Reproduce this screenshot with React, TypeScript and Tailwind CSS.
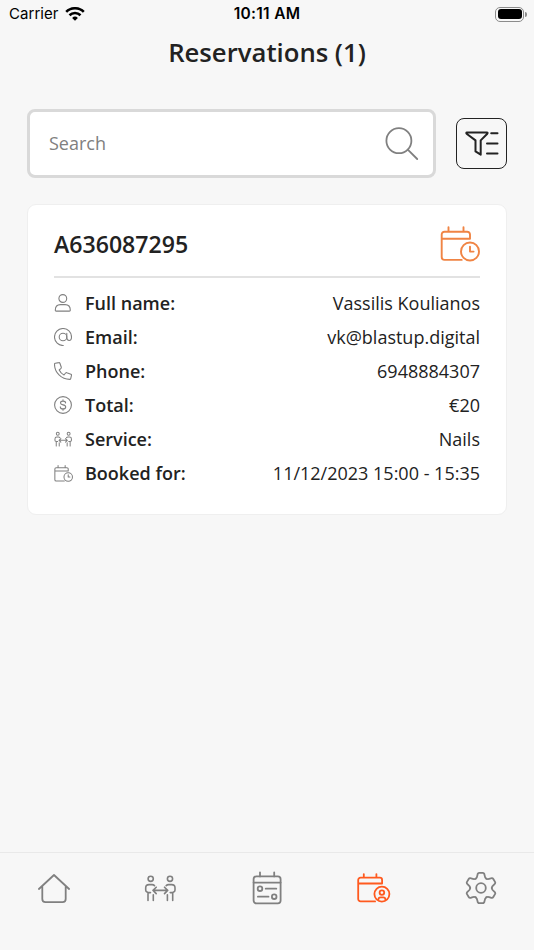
import type { ReactNode } from 'react';
import { clsx } from 'clsx';

interface IconProps {
  className?: string;
  strokeWidth?: number;
}

interface SvgProps extends IconProps {
  viewBox: string;
  children: ReactNode;
}

function Svg({ className, viewBox, strokeWidth = 1.8, children }: SvgProps) {
  return (
    <svg
      className={clsx('block shrink-0', className)}
      viewBox={viewBox}
      fill="none"
      stroke="currentColor"
      strokeWidth={strokeWidth}
      strokeLinecap="round"
      strokeLinejoin="round"
    >
      {children}
    </svg>
  );
}

function CalendarClockIcon({ className, strokeWidth = 1.9 }: IconProps) {
  return (
    <Svg className={className} viewBox="0 0 40 36" strokeWidth={strokeWidth}>
      <path d="M30 12.7V8.5a2.8 2.8 0 0 0-2.8-2.8H4.5a2.8 2.8 0 0 0-2.8 2.8v22.6a2.8 2.8 0 0 0 2.8 2.8h17.2M1.7 12.7h28.3M8.5 1.3v4.4M23.5 1.3v4.4" />
      <circle cx="30" cy="25.5" r="9" />
      <path d="M30 20.6v5h3.6" />
    </Svg>
  );
}

function PeopleIcon({ className, strokeWidth = 1.6 }: IconProps) {
  return (
    <Svg className={className} viewBox="0 0 32 28" strokeWidth={strokeWidth}>
      <circle cx="6.7" cy="4.8" r="2.6" />
      <circle cx="26" cy="4.8" r="2.6" />
      <path d="M4 26.5v-8l-1-.4c-1-.4-1.3-1-1.3-2.1v-2.2c0-2 1.4-3.2 3.4-3.2h3c1 0 1.7.3 2.4 1M4 18.6h2.5M9.3 26.5v-5.7" />
      <path d="M28.7 26.5v-8l1-.4c1-.4 1.3-1 1.3-2.1v-2.2c0-2-1.4-3.2-3.4-3.2h-3c-1 0-1.7.3-2.4 1M28.7 18.6h-2.5M23.4 26.5v-5.7" />
      <path d="M9 16.4h14.7M12.2 13.2 9 16.4l3.2 3.2M20.5 13.2l3.2 3.2-3.2 3.2" />
    </Svg>
  );
}

function PersonIcon() {
  return (
    <Svg className="h-[18px] w-[18px]" viewBox="0 0 18 18" strokeWidth={1.1}>
      <circle cx="8.8" cy="4.5" r="3.9" />
      <path d="M1.3 16.2c0-3.6 2-5.6 5.2-5.6h4.6c3.2 0 5.2 2 5.2 5.6 0 .6-.3.9-.9.9H2.2c-.6 0-.9-.3-.9-.9Z" />
    </Svg>
  );
}

function AtIcon() {
  return (
    <Svg className="h-[18px] w-[18px]" viewBox="0 0 18 18" strokeWidth={1.1}>
      <circle cx="9" cy="9" r="3.8" />
      <path d="M12.8 5.4v4.2c0 1.7 1 2.9 2.4 2.9s2.3-1.3 2.3-3.5A8.5 8.5 0 1 0 9.3 17.5" />
    </Svg>
  );
}

function PhoneIcon() {
  return (
    <Svg className="h-[18px] w-[18px]" viewBox="0 0 18 18" strokeWidth={1.1}>
      <path d="M1.3 1.2 4.8.6c.5-.1.9.1 1.1.6l1.4 4c.2.5 0 .9-.3 1.2L5.2 8c1 2.2 2.6 3.9 4.8 5l1.6-2c.3-.4.7-.5 1.2-.3l4.1 1.5c.5.2.7.6.6 1.1l-.8 3.3c-.1.5-.5.8-1 .8C7.5 17.4.5 10.5.5 2.2c0-.5.3-.9.8-1Z" />
    </Svg>
  );
}

function DollarIcon() {
  return (
    <Svg className="h-[18px] w-[18px]" viewBox="0 0 18 18" strokeWidth={1.1}>
      <circle cx="9" cy="9" r="8.4" />
      <path d="M11.6 6.9C11.5 5.7 10.5 5.1 9 5.1S6.5 5.9 6.5 7s.8 1.6 2.5 1.9 2.7.8 2.7 2-1.1 2-2.7 2-2.7-.7-2.7-2M9 3.8v1.3M9 12.9v1.3" />
    </Svg>
  );
}

function SearchIcon() {
  return (
    <Svg className="h-[34px] w-[34px] text-[#808080]" viewBox="0 0 34 34">
      <circle cx="13.9" cy="13.7" r="12.5" />
      <path d="m22.8 22.6 9.4 9.4" />
    </Svg>
  );
}

function FilterIcon() {
  return (
    <Svg className="-mt-px h-[26px] w-[34px]" viewBox="0 0 34 26" strokeWidth={2}>
      <path d="M1.9 2.4h20c.8 0 .9.7.4 1.3l-6.6 6.7v14.3l-5.2-3.3v-11L1.6 3.7c-.5-.6-.4-1.3.3-1.3Z" />
      <path d="M26.2 3.3h6.3M22 13.6h10.5M22 23.4h10.5" />
    </Svg>
  );
}

function HomeIcon() {
  return (
    <Svg className="ml-px h-8 w-8" viewBox="0 0 32 32">
      <path d="M.9 17 16 3l15.1 14M4.3 14v12.9a3.2 3.2 0 0 0 3.2 3.2h17a3.2 3.2 0 0 0 3.2-3.2V14" />
    </Svg>
  );
}

function ScheduleIcon() {
  return (
    <Svg className="h-[34px] w-[30px]" viewBox="0 0 30 34">
      <rect x="1.6" y="5.4" width="27" height="27" rx="2.8" />
      <path d="M1.6 11.6h27M8 1.3v4.1M22.2 1.3v4.1M13.7 17.7h10.6M5.9 25.7h10.6" />
      <circle cx="8" cy="17.7" r="2.3" />
      <circle cx="22.2" cy="25.7" r="2.3" />
    </Svg>
  );
}

function ReservationsIcon() {
  return (
    <Svg className="h-[30px] w-[34px]" viewBox="0 0 34 30">
      <path d="M25.1 10.5V6.9a2.3 2.3 0 0 0-2.3-2.3H3.5a2.3 2.3 0 0 0-2.3 2.3v19.2a2.3 2.3 0 0 0 2.3 2.3h14.6M1.2 10.5h23.9M6.8 1.1v3.5M19.4 1.1v3.5" />
      <circle cx="24.9" cy="21.1" r="7.5" />
      <circle cx="24.9" cy="19.6" r="2.3" />
      <path d="M21.4 26.6c0-1.6 1-2.3 2.3-2.3h2.4c1.3 0 2.3.7 2.3 2.3" />
    </Svg>
  );
}

// One tooth of the gear pointing up, repeated six times around the centre
const GEAR_ANGLES = [0, 60, 120, 180, 240, 300];

function GearIcon() {
  return (
    <Svg className="h-[34px] w-8" viewBox="-16 -17 32 34">
      {GEAR_ANGLES.map((angle) => (
        <path
          key={angle}
          transform={`rotate(${angle})`}
          d="M-5.4-9.3Q-3.9-10.2-3.5-13.2-3.3-15.2-1.7-15.2H1.7Q3.3-15.2 3.5-13.2 3.9-10.2 5.4-9.3"
        />
      ))}
      <circle r="4.8" />
    </Svg>
  );
}

function WifiIcon() {
  return (
    <Svg className="h-[14px] w-[20px] text-black" viewBox="0 0 20 14" strokeWidth={2.6}>
      <path d="M1.2 4.9a12.5 12.5 0 0 1 17.6 0M4.5 8.2a7.9 7.9 0 0 1 11 0" strokeLinecap="butt" />
      <path d="M10 13.8 7.1 10.9a4.1 4.1 0 0 1 5.8 0Z" fill="currentColor" stroke="none" />
    </Svg>
  );
}

function StatusBar() {
  return (
    <div className="grid h-7 grid-cols-3 items-center pl-[9px] pr-[7px] font-['Inter'] text-black">
      <div className="flex items-center gap-1.5">
        <span className="text-[15px] leading-7 tracking-[0.05px]">Carrier</span>
        <WifiIcon />
      </div>
      <span className="-ml-0.5 text-center text-[15.5px] font-semibold leading-7 tracking-[0.3px]">
        10:11 AM
      </span>
      <div className="flex items-center justify-end gap-px">
        <div className="h-[15px] w-[29px] rounded-[5px] border border-[#8c8c8c] p-[1.5px]">
          <div className="h-full rounded-[3px] bg-black" />
        </div>
        <div className="h-[5px] w-[2px] rounded-r-full bg-[#8c8c8c]" />
      </div>
    </div>
  );
}

const DETAILS = [
  { label: 'Full name:', value: 'Vassilis Koulianos', icon: <PersonIcon /> },
  { label: 'Email:', value: 'vk@blastup.digital', icon: <AtIcon /> },
  { label: 'Phone:', value: '6948884307', icon: <PhoneIcon /> },
  { label: 'Total:', value: '€20', icon: <DollarIcon /> },
  {
    label: 'Service:',
    value: 'Nails',
    icon: <PeopleIcon className="h-4 w-[18px]" strokeWidth={1.8} />,
  },
  {
    label: 'Booked for:',
    value: '11/12/2023 15:00 - 15:35',
    icon: <CalendarClockIcon className="h-[17px] w-[19px]" strokeWidth={2.2} />,
  },
];

function ReservationCard() {
  return (
    <article className="mx-[27px] mt-[26px] h-[311px] rounded-[9px] border border-[#efefef] bg-white px-[26px]">
      <div className="flex h-[73px] items-center justify-between border-b-2 border-[#e2e2e2] pt-1.5">
        <h2 className="text-[23.1px] font-semibold leading-8">A636087295</h2>
        <CalendarClockIcon className="h-9 w-10 text-[#f08444]" />
      </div>
      <dl className="pt-2">
        {DETAILS.map((row) => (
          <div key={row.label} className="flex h-[34px] items-center text-lg">
            <span className="flex w-[31px] text-[#808080]">{row.icon}</span>
            <dt className="font-semibold">{row.label}</dt>
            <dd className="ml-auto">{row.value}</dd>
          </div>
        ))}
      </dl>
    </article>
  );
}

const TABS = [
  { name: 'home', icon: <HomeIcon /> },
  { name: 'services', icon: <PeopleIcon className="h-7 w-8" /> },
  { name: 'schedule', icon: <ScheduleIcon /> },
  { name: 'reservations', icon: <ReservationsIcon />, active: true },
  { name: 'settings', icon: <GearIcon /> },
];

function TabBar() {
  return (
    <nav className="mt-auto grid h-[98px] grid-cols-5 border-t border-[#e9e9e9]">
      {TABS.map((tab) => (
        <button
          key={tab.name}
          aria-label={tab.name}
          className={clsx(
            'flex h-[70px] items-center justify-center',
            tab.active ? 'text-[#ff5a1f]' : 'text-[#808080]',
          )}
        >
          {tab.icon}
        </button>
      ))}
    </nav>
  );
}

export default function App() {
  return (
    <div className="flex h-screen flex-col bg-[#f7f7f7] font-['Open_Sans',sans-serif] text-[#222]">
      <StatusBar />
      <h1 className="mt-[7px] text-center text-[25.7px] font-semibold leading-9">
        Reservations (1)
      </h1>

      <div className="mt-[38px] flex items-center gap-5 px-[27px]">
        <div className="flex h-[69px] flex-1 items-center justify-between rounded-[8px] border-[3px] border-[#d9d9d9] bg-white pl-[19px] pr-3.5">
          <input
            className="w-56 pb-px text-lg outline-none placeholder:text-[#808080]"
            placeholder="Search"
          />
          <SearchIcon />
        </div>
        <button
          aria-label="Filter"
          className="flex h-[51px] w-[51px] items-center justify-center rounded-[8px] border-[1.5px] border-[#222]"
        >
          <FilterIcon />
        </button>
      </div>

      <ReservationCard />
      <TabBar />
    </div>
  );
}
